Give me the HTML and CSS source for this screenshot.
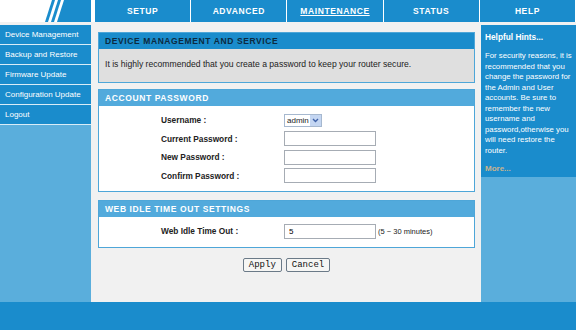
FILE: index.html
```html
<!DOCTYPE html>
<html lang="en">
<head>
  <meta charset="UTF-8">
  <meta name="viewport" content="width=device-width, initial-scale=1.0">
  <title>Maintenance - Device Management</title>
  <link rel="stylesheet" href="styles.css">
</head>
<body>
  <div class="page">

    <div class="top">
      <div class="logo">
        <svg width="46" height="22" viewBox="0 0 46 22">
          <polygon points="0,22 3,22 10,0 7,0" fill="#1a8ccc"/>
          <polygon points="6,22 9,22 16,0 13,0" fill="#1a8ccc"/>
          <polygon points="12,22 46,22 46,0 19,0" fill="#1a8ccc"/>
        </svg>
      </div>
      <div class="nav">
        <a class="nav-tab">SETUP</a>
        <a class="nav-tab">ADVANCED</a>
        <a class="nav-tab active">MAINTENANCE</a>
        <a class="nav-tab">STATUS</a>
        <a class="nav-tab">HELP</a>
      </div>
    </div>

    <div class="main">
      <div class="side">
        <a class="side-item">Device Management</a>
        <a class="side-item">Backup and Restore</a>
        <a class="side-item">Firmware Update</a>
        <a class="side-item">Configuration Update</a>
        <a class="side-item">Logout</a>
      </div>

      <div class="content">
        <div class="box intro">
          <div class="box-head dark">DEVICE MANAGEMENT AND SERVICE</div>
          <div class="box-body gray">It is highly recommended that you create a password to keep your router secure.</div>
        </div>

        <div class="box">
          <div class="box-head">ACCOUNT PASSWORD</div>
          <div class="box-body form">
            <div class="row">
              <span class="label">Username :</span>
              <span class="select">admin<span class="select-arrow"><svg width="9" height="9" viewBox="0 0 9 9"><path d="M2 3 L4.5 5.5 L7 3" fill="none" stroke="#3f62a8" stroke-width="1.4"/></svg></span></span>
            </div>
            <div class="row">
              <span class="label">Current Password :</span>
              <input class="field" type="password">
            </div>
            <div class="row">
              <span class="label">New Password :</span>
              <input class="field" type="password">
            </div>
            <div class="row">
              <span class="label">Confirm Password :</span>
              <input class="field" type="password">
            </div>
          </div>
        </div>

        <div class="box">
          <div class="box-head">WEB IDLE TIME OUT SETTINGS</div>
          <div class="box-body form">
            <div class="row">
              <span class="label">Web Idle Time Out :</span>
              <input class="field" type="text" value="5">
              <span class="note">(5 ~ 30 minutes)</span>
            </div>
          </div>
        </div>

        <div class="actions">
          <button class="btn">Apply</button>
          <button class="btn">Cancel</button>
        </div>
      </div>

      <div class="hints">
        <div class="hints-body">
          <div class="hints-title">Helpful Hints...</div>
          <p>For security reasons, it is recommended that you change the password for the Admin and User accounts. Be sure to remember the new username and password,otherwise you will need restore the router.</p>
          <a class="more">More...</a>
        </div>
      </div>
    </div>

    <div class="footer"></div>
  </div>
</body>
</html>
```

FILE: styles.css
```css
html, body {
  margin: 0;
  padding: 0;
  background-color: #fff;
  font-family: "Liberation Sans", Arial, sans-serif;
  font-size: 8px;
  color: #222;
}
*, *:before, *:after { box-sizing: border-box; }

.page { width: 578px; }

.top {
  display: flex;
  height: 22px;
}
.logo {
  width: 91px;
  padding-left: 45px;
}
.logo svg { display: block; }
.nav {
  display: flex;
  gap: 1px;
  width: 480px;
  margin-left: 4px;
}
.nav-tab {
  flex: 1;
  background-color: #1a8ccc;
  color: #fff;
  font-weight: bold;
  font-size: 8.5px;
  letter-spacing: 0.6px;
  text-align: center;
  line-height: 22px;
}
.nav-tab.active { text-decoration: underline; }

.main {
  display: flex;
  height: 280px;
  margin-right: 2px;
  background-color: #f1f1f1;
}
.side {
  width: 91px;
  margin-top: 3px;
  background-color: #5aaedc;
}
.side-item {
  display: block;
  height: 20px;
  line-height: 19px;
  padding-left: 5px;
  background-color: #1a8ccc;
  border-bottom: 1px solid #d8ecf7;
  color: #fff;
}

.content {
  flex: 1;
  padding: 10px 6px 0 7px;
}
.box {
  border: 1px solid #4ea6d8;
  margin-bottom: 8px;
}
.box.intro { margin-bottom: 6px; }
.box-head {
  height: 16px;
  line-height: 16px;
  padding-left: 6px;
  background-color: #52aadc;
  color: #fff;
  font-weight: bold;
  font-size: 8.5px;
  letter-spacing: 0.6px;
}
.box-head.dark {
  background-color: #1a8ccc;
  color: #0c2a40;
}
.box-body { background-color: #fff; }
.box-body.gray {
  background-color: #dfdfdf;
  height: 33px;
  padding: 10px 0 0 6px;
  font-size: 8.6px;
}
.box-body.form { padding: 5px 0 6px 62px; }

.row {
  display: flex;
  align-items: center;
  height: 18.5px;
}
.label {
  width: 123px;
  font-weight: bold;
  font-size: 8.3px;
}
.field {
  width: 92px;
  height: 15px;
  margin: 0;
  padding: 0 4px;
  border: 1px solid #a6acb4;
  font-family: "Liberation Sans", Arial, sans-serif;
  font-size: 8px;
  outline: none;
}
.note {
  margin-left: 2px;
  font-size: 7.5px;
}
.select {
  display: flex;
  align-items: center;
  justify-content: space-between;
  width: 38px;
  height: 13px;
  padding-left: 2px;
  border: 1px solid #a6b8cf;
  background-color: #fff;
  font-size: 8px;
}
.select-arrow {
  display: flex;
  align-items: center;
  justify-content: center;
  width: 11px;
  height: 11px;
  background-color: #c4d6f2;
}

.actions {
  display: flex;
  justify-content: center;
  gap: 4px;
  padding-top: 2px;
}
.btn {
  height: 14px;
  padding: 0 5px;
  border: 1px solid #6b7a88;
  border-radius: 2px;
  background-color: #f6f6f4;
  font-family: "Liberation Mono", "Courier New", monospace;
  font-size: 9px;
  line-height: 12px;
  color: #111;
}

.hints {
  width: 95px;
  margin-top: 3px;
  background-color: #5aaedc;
}
.hints-body {
  height: 152px;
  padding: 7px 4px 0 4px;
  background-color: #1a8ccc;
  color: #fff;
}
.hints-title {
  font-weight: bold;
  font-size: 8.3px;
}
.hints p {
  margin: 9px 0 0 0;
  line-height: 10.5px;
  font-size: 7.8px;
}
.more {
  display: block;
  margin-top: 8px;
  color: #c9b48f;
  font-weight: bold;
}

.footer {
  height: 28px;
  margin-right: 2px;
  background-color: #1a8ccc;
}
```
